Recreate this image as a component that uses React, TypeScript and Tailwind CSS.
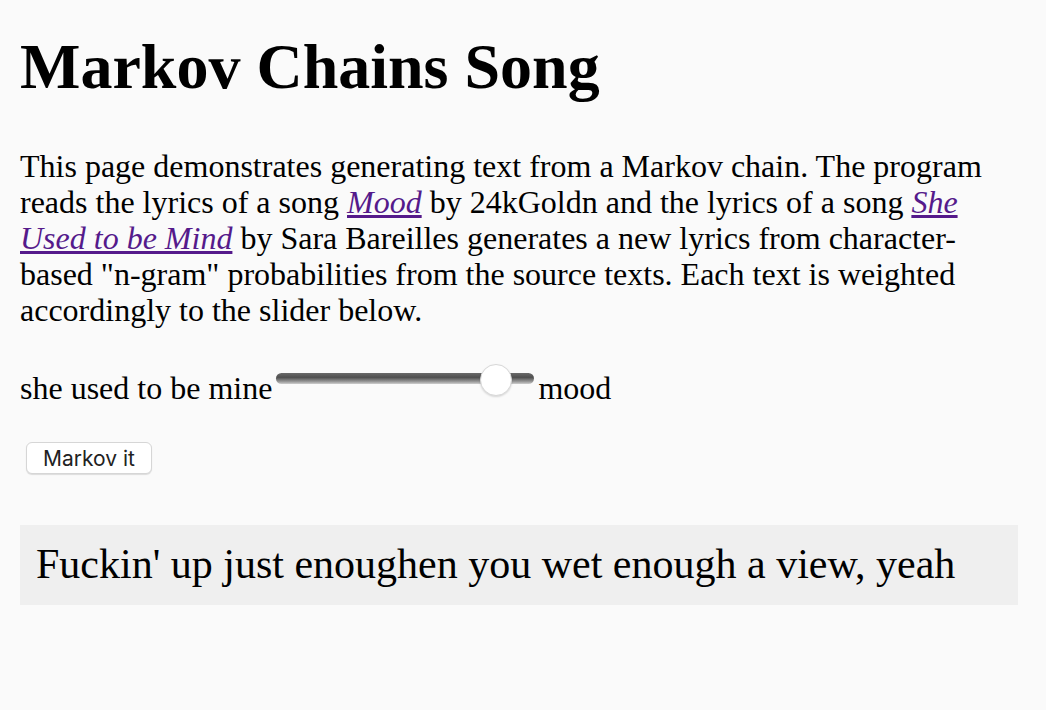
import { useState } from "react";

const serif = "font-['Liberation_Serif','Times_New_Roman',serif]";

export default function App() {
  const [weight] = useState(0.85);

  return (
    <div className={`min-h-[710px] bg-[#fafafa] px-5 pt-[30px] text-black ${serif}`}>
      <h1 className="text-[64px] font-bold leading-[74px]">Markov Chains Song</h1>

      <p className="mt-[44px] text-[32px] leading-[36px]">
        This page demonstrates generating text from a Markov chain. The program reads the lyrics of a song{" "}
        <a href="#" className="italic text-[#551a8b] underline">
          Mood
        </a>{" "}
        by 24kGoldn and the lyrics of a song{" "}
        <a href="#" className="italic text-[#551a8b] underline">
          She Used to be Mind
        </a>{" "}
        by Sara Bareilles generates a new lyrics from character-based "n-gram" probabilities from the source
        texts. Each text is weighted accordingly to the slider below.
      </p>

      {/* Weight slider */}
      <div className="mt-[42px] flex items-start gap-1 text-[32px] leading-[36px]">
        <span>she used to be mine</span>
        <div className="relative -mt-[6px] h-8 w-[258px]">
          <div className="absolute left-0 right-0 top-[9px] h-[11px] rounded-full bg-[linear-gradient(to_bottom,#6a6a6a,#4f4f4f_40%,#9c9c9c_80%,#cfcfcf)]" />
          <div
            className="absolute top-0 h-8 w-8 -translate-x-1/2 rounded-full border border-[#d8d8d8] bg-white shadow-[0_1px_2px_rgba(0,0,0,0.15)]"
            style={{ left: `${weight * 100}%` }}
          />
        </div>
        <span>mood</span>
      </div>

      <button className="ml-[6px] mt-[36px] h-8 rounded-md border border-[#d6d6d6] bg-white px-4 font-['Inter','Liberation_Sans',sans-serif] text-[21px] text-[#222] shadow-[0_1px_1px_rgba(0,0,0,0.12)]">
        Markov it
      </button>

      <div className="mr-2 mt-[51px] bg-[#efefef] pb-[17px] pl-4 pt-[15px]">
        <p className="text-[42px] leading-[48px]">Fuckin' up just enoughen you wet enough a view, yeah</p>
      </div>
    </div>
  );
}
